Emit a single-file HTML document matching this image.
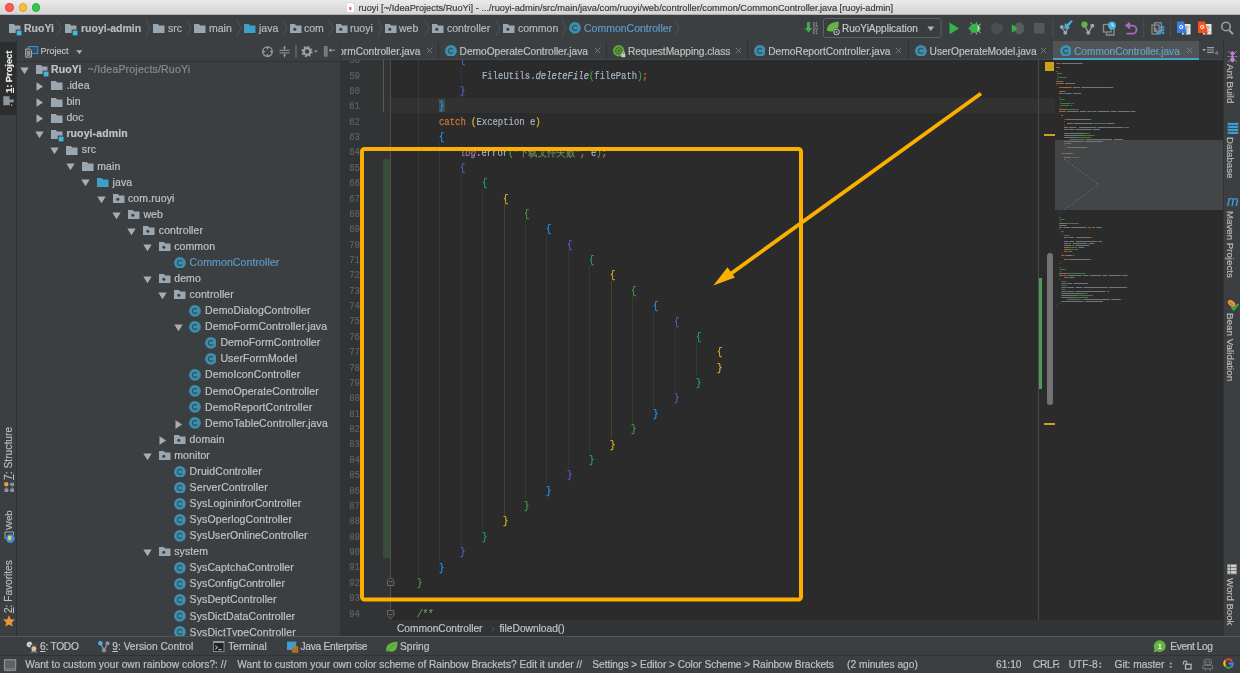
<!DOCTYPE html><html><head><meta charset="utf-8"><title>ruoyi</title><style>
*{box-sizing:border-box;margin:0;padding:0}
html,body{width:1240px;height:673px;overflow:hidden;background:#3c3f41}
body{font-family:"Liberation Sans",sans-serif;color:#c3c3c3;position:relative;font-size:10.5px;-webkit-text-stroke:.18px}
.abs{position:absolute}
.t{position:absolute;white-space:pre;line-height:16px;height:16px}
#title{left:0;top:0;width:1240px;height:15px;background:linear-gradient(#ebebeb,#d4d4d4);border-bottom:1px solid #b1b1b1}
#title .txt{position:absolute;left:358.500px;top:0.500px;line-height:15px;font-size:9.25px;color:#3a3a3a;white-space:pre}
.dot{position:absolute;top:3.400px;width:8.300px;height:8.300px;border-radius:50%}
#nav{left:0;top:15px;width:1240px;height:26.500px;background:#3c3f41;border-bottom:1px solid #36383a}
#lstripe{left:0;top:41px;width:17px;height:596px;background:#3c3f41;border-right:1px solid #323232}
#proj{left:17px;top:41px;width:323px;height:595px;background:#3c3f41;overflow:hidden}
#projedge{left:340px;top:41.500px;width:1px;height:594.500px;background:#333537;z-index:5}
#projhead{left:0;top:0;width:323px;height:21px;border-bottom:1px solid #323232}
#editor{left:340px;top:60px;width:698px;height:560px;background:#2b2b2b;overflow:hidden}
#gutter{left:0;top:0;width:50.5px;height:560px;background:#313335;border-right:1px solid #4e4e4e}
#tabs{left:340px;top:41px;width:883px;height:19.400px;background:#3c3f41;overflow:hidden}
#mstripe{left:1038px;top:60px;width:17px;height:560px;background:#2b2b2b;border-left:1px solid #4a4a4a}
#minimap{left:1055px;top:60px;width:168px;height:560px;background:#2b2b2b;overflow:hidden}
#rstripe{left:1223px;top:41px;width:17px;height:596px;background:#3c3f41;border-left:1px solid #323232}
#crumbs{left:340px;top:620px;width:883px;height:16px;background:#313335}
#bbar{left:0;top:636px;width:1240px;height:20px;background:#3c3f41;border-top:1px solid #555555}
#status{left:0;top:655px;width:1240px;height:18px;background:#3c3f41;border-top:1px solid #323232}
.ln{position:absolute;right:0;width:20px;text-align:right;font-family:"Liberation Mono",monospace;font-size:10.5px;color:#606366;white-space:pre;transform-origin:100% 50%;transform:scaleX(.86)}
.code{position:absolute;font-family:"Liberation Mono",monospace;font-size:10.5px;white-space:pre;transform-origin:0 50%;transform:scaleX(.849);color:#a9b7c6;line-height:15.37px;height:15.37px}
.vt{position:absolute;white-space:pre;font-size:10.5px;line-height:14px;height:14px;transform-origin:0 0}
#wrap{position:absolute;left:0;top:0;width:1240px;height:673px;will-change:transform;filter:grayscale(0)}</style></head><body><div id="wrap">
<div id="title" class="abs">
<div class="dot" style="left:5.3px;background:#fc5b57;border:0.5px solid #e0443e"></div>
<div class="dot" style="left:18.5px;background:#fdbc40;border:0.5px solid #dfa023"></div>
<div class="dot" style="left:31.8px;background:#34c84a;border:0.5px solid #27aa35"></div>
<svg class="abs" style="left:346px;top:2px" width="9" height="11" viewBox="0 0 9 11"><path d="M0.5 0.5h5.5l2.5 2.5v7.5h-8z" fill="#fff" stroke="#c9c9c9" stroke-width=".6"/><rect x="3.2" y="5" width="2.2" height="3" fill="#e66" /></svg>
<div class="txt">ruoyi [~/IdeaProjects/RuoYi] - .../ruoyi-admin/src/main/java/com/ruoyi/web/controller/common/CommonController.java [ruoyi-admin]</div>
</div>
<div id="nav" class="abs">
<svg class="abs" style="left:8.7px;top:8.5px" width="14.5" height="14" viewBox="0 0 14.5 14"><path d="M0 0h4.83l1.3 1.6h5.37v7.40h-11.5z" fill="#9aa7b0"/><rect x="6.70" y="5.60" width="5.8" height="5.8" fill="#3c3f41"/><rect x="7.70" y="6.60" width="4.8" height="4.8" fill="#40b6e0"/></svg>
<div class="t" style="left:24px;top:5px;color:#bbbbbb;font-weight:bold;">RuoYi</div>
<svg class="abs" style="left:65px;top:8.5px" width="14.5" height="14" viewBox="0 0 14.5 14"><path d="M0 0h4.83l1.3 1.6h5.37v7.40h-11.5z" fill="#9aa7b0"/><rect x="6.70" y="5.60" width="5.8" height="5.8" fill="#3c3f41"/><rect x="7.70" y="6.60" width="4.8" height="4.8" fill="#40b6e0"/></svg>
<div class="t" style="left:81px;top:5px;color:#bbbbbb;font-weight:bold;">ruoyi-admin</div>
<svg class="abs" style="left:153px;top:8.5px" width="14.5" height="14" viewBox="0 0 14.5 14"><path d="M0 0h4.83l1.3 1.6h5.37v7.40h-11.5z" fill="#9aa7b0"/></svg>
<div class="t" style="left:168px;top:5px;color:#bbbbbb;">src</div>
<svg class="abs" style="left:194px;top:8.5px" width="14.5" height="14" viewBox="0 0 14.5 14"><path d="M0 0h4.83l1.3 1.6h5.37v7.40h-11.5z" fill="#9aa7b0"/></svg>
<div class="t" style="left:209px;top:5px;color:#bbbbbb;">main</div>
<svg class="abs" style="left:244px;top:8.5px" width="14.5" height="14" viewBox="0 0 14.5 14"><path d="M0 0h4.83l1.3 1.6h5.37v7.40h-11.5z" fill="#3f9fc4"/></svg>
<div class="t" style="left:259px;top:5px;color:#bbbbbb;">java</div>
<svg class="abs" style="left:290px;top:8.5px" width="14.5" height="14" viewBox="0 0 14.5 14"><path d="M0 0h4.83l1.3 1.6h5.37v7.40h-11.5z" fill="#9aa7b0"/><circle cx="4.83" cy="5.22" r="1.55" fill="#3c3f41"/></svg>
<div class="t" style="left:304px;top:5px;color:#bbbbbb;">com</div>
<svg class="abs" style="left:336px;top:8.5px" width="14.5" height="14" viewBox="0 0 14.5 14"><path d="M0 0h4.83l1.3 1.6h5.37v7.40h-11.5z" fill="#9aa7b0"/><circle cx="4.83" cy="5.22" r="1.55" fill="#3c3f41"/></svg>
<div class="t" style="left:350px;top:5px;color:#bbbbbb;">ruoyi</div>
<svg class="abs" style="left:385px;top:8.5px" width="14.5" height="14" viewBox="0 0 14.5 14"><path d="M0 0h4.83l1.3 1.6h5.37v7.40h-11.5z" fill="#9aa7b0"/><circle cx="4.83" cy="5.22" r="1.55" fill="#3c3f41"/></svg>
<div class="t" style="left:399px;top:5px;color:#bbbbbb;">web</div>
<svg class="abs" style="left:432px;top:8.5px" width="14.5" height="14" viewBox="0 0 14.5 14"><path d="M0 0h4.83l1.3 1.6h5.37v7.40h-11.5z" fill="#9aa7b0"/><circle cx="4.83" cy="5.22" r="1.55" fill="#3c3f41"/></svg>
<div class="t" style="left:447px;top:5px;color:#bbbbbb;">controller</div>
<svg class="abs" style="left:503px;top:8.5px" width="14.5" height="14" viewBox="0 0 14.5 14"><path d="M0 0h4.83l1.3 1.6h5.37v7.40h-11.5z" fill="#9aa7b0"/><circle cx="4.83" cy="5.22" r="1.55" fill="#3c3f41"/></svg>
<div class="t" style="left:518px;top:5px;color:#bbbbbb;">common</div>
<svg class="abs" style="left:569px;top:7px" width="11.8" height="11.8" viewBox="0 0 12 12"><circle cx="6" cy="6" r="6" fill="#3e8fad"/><path d="M8.1 4.6A2.5 2.5 0 1 0 8.1 7.4" fill="none" stroke="#2a5468" stroke-width="1.35"/></svg>
<div class="t" style="left:584px;top:5px;color:#6199c6;">CommonController</div>
<svg class="abs" style="left:56px;top:4px" width="6" height="18" viewBox="0 0 6 18"><path d="M0.5 0.5L5 9L0.5 17.5" fill="none" stroke="#505355" stroke-width="1"/></svg>
<svg class="abs" style="left:145px;top:4px" width="6" height="18" viewBox="0 0 6 18"><path d="M0.5 0.5L5 9L0.5 17.5" fill="none" stroke="#505355" stroke-width="1"/></svg>
<svg class="abs" style="left:186px;top:4px" width="6" height="18" viewBox="0 0 6 18"><path d="M0.5 0.5L5 9L0.5 17.5" fill="none" stroke="#505355" stroke-width="1"/></svg>
<svg class="abs" style="left:236px;top:4px" width="6" height="18" viewBox="0 0 6 18"><path d="M0.5 0.5L5 9L0.5 17.5" fill="none" stroke="#505355" stroke-width="1"/></svg>
<svg class="abs" style="left:282px;top:4px" width="6" height="18" viewBox="0 0 6 18"><path d="M0.5 0.5L5 9L0.5 17.5" fill="none" stroke="#505355" stroke-width="1"/></svg>
<svg class="abs" style="left:328px;top:4px" width="6" height="18" viewBox="0 0 6 18"><path d="M0.5 0.5L5 9L0.5 17.5" fill="none" stroke="#505355" stroke-width="1"/></svg>
<svg class="abs" style="left:377px;top:4px" width="6" height="18" viewBox="0 0 6 18"><path d="M0.5 0.5L5 9L0.5 17.5" fill="none" stroke="#505355" stroke-width="1"/></svg>
<svg class="abs" style="left:424px;top:4px" width="6" height="18" viewBox="0 0 6 18"><path d="M0.5 0.5L5 9L0.5 17.5" fill="none" stroke="#505355" stroke-width="1"/></svg>
<svg class="abs" style="left:495px;top:4px" width="6" height="18" viewBox="0 0 6 18"><path d="M0.5 0.5L5 9L0.5 17.5" fill="none" stroke="#505355" stroke-width="1"/></svg>
<svg class="abs" style="left:561px;top:4px" width="6" height="18" viewBox="0 0 6 18"><path d="M0.5 0.5L5 9L0.5 17.5" fill="none" stroke="#505355" stroke-width="1"/></svg>
<svg class="abs" style="left:674px;top:4px" width="6" height="18" viewBox="0 0 6 18"><path d="M0.5 0.5L5 9L0.5 17.5" fill="none" stroke="#505355" stroke-width="1"/></svg>
<svg class="abs" style="left:800px;top:0" width="440" height="26" viewBox="800 15 440 26">
<path d="M807 22h3v6h2.4l-3.9 4.6-3.9-4.6h2.4z" fill="#3fae49"/>
<g fill="#9da0a2" font-family="Liberation Mono" font-size="4.6"><text x="812.6" y="25.6">01</text><text x="812.6" y="29.6">10</text><text x="812.6" y="33.6">01</text></g>
<rect x="823.5" y="18.5" width="117.5" height="19" rx="2" fill="#3a3d3f" stroke="#5e6163" stroke-width="1"/>
<path d="M827 31c-.5-6 4-8.5 11.500-9.500c.8 5-1 10-6 10c-2 0-3.500-.5-5.500-.5z" fill="#62b543"/>
<circle cx="836.500" cy="32" r="3.400" fill="#3a3d3f"/><circle cx="836.500" cy="32" r="2.700" fill="none" stroke="#a7adb2" stroke-width="1.100"/><circle cx="836.500" cy="32" r=".9" fill="#a7adb2"/>
<path d="M927.400 26.600h6.800l-3.400 4.300z" fill="#b4b4b4"/>
<path d="M949.500 22.500v11.800l9.400-5.900z" fill="#35b346"/>
<g stroke="#b9bcbd" stroke-width=".9" fill="none"><path d="M970.500 22.500l2 2M970 28.300h-1.500M970.500 34.300l2-2M977 22.300l-1.500 2.500M977 34.500l-1.500-2.500M979 25l1.800-1M979 31.600l1.800 1"/></g>
<ellipse cx="975" cy="28.300" rx="5.600" ry="4.600" fill="#35b346"/><path d="M977.600 24.700a4.500 4.500 0 0 1 0 7.200z" fill="#d4d6d7"/>
<path d="M991 29c0-4 3-6.500 5-6.500c1.500 0 1.500 1.200 3 1.200c2.500 0 4 2 4 4.500c0 3.500-3 6-6.500 6c-3 0-5.500-2-5.500-5.200z" fill="#4b4d4e"/>
<path d="M1017.500 22.500l3.200 0l3.200 3v5.700l-3.200 3h-3.200l-3-3v-5.700z" fill="#5a5c5d"/>
<path d="M1011.800 24.300v8.400l5.800-4.200z" fill="#35b346"/>
<rect x="1034" y="23" width="10.500" height="10.500" fill="#555758"/>
<path d="M1053 20v18" stroke="#5a5d5f" stroke-width="1" stroke-dasharray="1 1"/>
<path d="M1143.7 20v18" stroke="#5a5d5f" stroke-width="1" stroke-dasharray="1 1"/>
<path d="M1170.5 20v18" stroke="#5a5d5f" stroke-width="1" stroke-dasharray="1 1"/>
<g stroke="#9aa7b0" stroke-width="1.200" fill="none"><path d="M1062 27.500l3.200 5M1068 28l-2.300 4.500"/></g><circle cx="1061.800" cy="27" r="1.900" fill="#9aa7b0"/><circle cx="1065.300" cy="32.800" r="1.900" fill="#9aa7b0"/>
<path d="M1072.800 21l-4.300 5.600l1.800 1.300l-6 1.200l.6-6l1.700 1.500l4.600-4.300z" fill="#40b6e0"/>
<g stroke="#9aa7b0" stroke-width="1.300" fill="none"><path d="M1084.500 25l3.700 7.300M1092.300 26l-3.700 6.500"/></g><circle cx="1084.500" cy="24.600" r="3.100" fill="#62b543"/><circle cx="1092.300" cy="25.800" r="2" fill="#9aa7b0"/><circle cx="1088.300" cy="32.800" r="2" fill="#9aa7b0"/>
<g fill="none" stroke="#8c8f91" stroke-width="1.300"><rect x="1103.500" y="24.500" width="7.500" height="7.500"/><path d="M1106.500 32.500v2.500h7.500v-7.500h-2.500"/></g><circle cx="1112" cy="25.500" r="3.900" fill="#40b6e0"/><path d="M1112 23.200v2.500h2.200" stroke="#eaf6fb" stroke-width=".9" fill="none"/>
<path d="M1126.500 33.700h6a4 4 0 0 0 0-8h-4.500" fill="none" stroke="#a86ac4" stroke-width="1.800"/><path d="M1130 21.800v7.600l-5.300-3.800z" fill="#a86ac4"/>
<g fill="none" stroke="#8c8f91" stroke-width="1.200"><rect x="1154.500" y="22.800" width="7" height="8.500"/><rect x="1152" y="25" width="7" height="9"/></g><rect x="1155" y="28" width="1.600" height="3.500" fill="#8c8f91"/>
<rect x="1156.3" y="32.0" width="2.200" height="2.200" fill="#3d9fd0"/>
<rect x="1159.2" y="26.2" width="2.200" height="2.200" fill="#3d9fd0"/>
<rect x="1159.2" y="29.1" width="2.200" height="2.200" fill="#3d9fd0"/>
<rect x="1159.2" y="32.0" width="2.200" height="2.200" fill="#3d9fd0"/>
<rect x="1162.1" y="26.2" width="2.200" height="2.200" fill="#3d9fd0"/>
<rect x="1162.1" y="29.1" width="2.200" height="2.200" fill="#3d9fd0"/>
<rect x="1162.1" y="32.0" width="2.200" height="2.200" fill="#3d9fd0"/>
<rect x="1182" y="24" width="8.500" height="10.500" fill="#e9e9e4"/><path d="M1184 27h5M1186.5 26v1.200M1184.6 32l3.500-4.500M1185 28.500l3.800 3.500" stroke="#8d8d88" stroke-width=".7" fill="none"/>
<path d="M1177 21.500h7l2.800 11.500h-9.800z" fill="#3c7be0"/><path d="M1183.3 33l3.500 0l-2 2.200z" fill="#2a56b0"/>
<circle cx="1181.2" cy="27" r="1.700" fill="none" stroke="#fff" stroke-width=".9"/><path d="M1181.2 27h1.900" stroke="#fff" stroke-width=".8"/>
<rect x="1203" y="24" width="8.500" height="10.500" fill="#e9e9e4"/><path d="M1205 27h5M1207.5 26v1.200M1205.6 32l3.500-4.500M1206 28.500l3.800 3.500" stroke="#8d8d88" stroke-width=".7" fill="none"/>
<path d="M1198 21.500h7l2.800 11.500h-9.800z" fill="#f4511e"/><path d="M1204.3 33l3.500 0l-2 2.200z" fill="#c23c12"/>
<circle cx="1202.2" cy="27" r="1.700" fill="none" stroke="#fff" stroke-width=".9"/><path d="M1202.2 27h1.900" stroke="#fff" stroke-width=".8"/>
<circle cx="1226" cy="26.500" r="4.300" fill="none" stroke="#9a9c9e" stroke-width="1.600"/><path d="M1229 30l4 4.300" stroke="#9a9c9e" stroke-width="2"/>
</svg>
<div class="t" style="left:842px;top:5.700px;font-size:10px;color:#c8c8c8">RuoYiApplication</div>
</div>
<div id="lstripe" class="abs">
<div class="abs" style="left:0;top:0.8px;width:16px;height:73.600px;background:#2b2d2e"></div>
<div class="vt" style="left:2.400px;top:51.8px;font-size:9.3px;transform:rotate(-90deg);color:#ececec;font-weight:bold;"><u>1</u>: Project</div>
<div class="vt" style="left:2.400px;top:438.8px;font-size:10.3px;transform:rotate(-90deg);color:#bbbbbb;"><u>7</u>: Structure</div>
<div class="vt" style="left:2.400px;top:488.6px;font-size:9.6px;transform:rotate(-90deg);color:#bbbbbb;">Web</div>
<div class="vt" style="left:2.400px;top:572px;font-size:10.1px;transform:rotate(-90deg);color:#bbbbbb;"><u>2</u>: Favorites</div>
<svg class="abs" style="left:3px;top:54.500px" width="12" height="11" viewBox="0 0 12 11"><path d="M0.3 0.3h6.200v3.200h4.200v5.800h-10.400z" fill="#8a97a0"/><rect x="6.800" y="6.300" width="4.600" height="4.300" fill="#2b2d2e"/><rect x="8" y="8.600" width="1.200" height="1.200" fill="#c8c8c8"/></svg>
<svg class="abs" style="left:4px;top:441px" width="11" height="11" viewBox="0 0 11 11"><rect x="0.300" y="0.300" width="3.800" height="3.800" fill="#e8a33d"/><rect x="6.400" y="0.700" width="3.600" height="3.200" fill="#8a97a0"/><rect x="0.500" y="6.400" width="3.600" height="3.600" fill="#8a97a0"/><rect x="6.400" y="6.400" width="3.600" height="3.600" fill="#8a97a0"/><path d="M4 2.300h2.500M2.300 4v2.500M8.200 4v2.500M4 8.200h2.500" stroke="#6f7a82" stroke-width=".8"/></svg>
<svg class="abs" style="left:3.5px;top:490px" width="12" height="13" viewBox="0 0 12 13"><path d="M1 8v-7h8.500v3" fill="none" stroke="#9aa7b0" stroke-width="1"/><circle cx="6.300" cy="7.600" r="4.400" fill="#3d8fd6"/><path d="M4 5.200c1.500-.8 3-.3 3.600.8c.4 1.300-1 1.800-.6 3.200c-1.200.4-2.600-.2-3-1.500c-.3-1 .1-1.800 0-2.500z" fill="#f2c94c"/></svg>
<svg class="abs" style="left:3px;top:574.200px" width="12" height="12" viewBox="0 0 12 12"><path d="M6 0.300l1.750 3.900l4.100.4l-3.100 2.800l.9 4.200l-3.650-2.200l-3.650 2.200l.9-4.200l-3.100-2.800l4.100-.4z" fill="#e8963a"/></svg>
</div>
<div id="proj" class="abs"><div id="projhead" class="abs">
<svg class="abs" style="left:8px;top:4.600px" width="14" height="12" viewBox="0 0 14 12"><rect x="3.300" y="0.600" width="9.500" height="7" fill="#2e5068" stroke="#3d9fd0" stroke-width=".9"/><path d="M0.600 3h4.300l1.600 1.600v6.600h-5.900z" fill="#55585a" stroke="#a9adb0" stroke-width=".9"/><rect x="1.900" y="5" width="3.300" height="4.800" fill="#8b8f92"/></svg>
<div class="t" style="left:23.600px;top:2.400px;font-size:9px;color:#c0c0c0">Project</div>
<svg class="abs" style="left:58.600px;top:9.400px" width="7" height="5" viewBox="0 0 7 5"><path d="M0.2 0.3h6.200L3.300 4.100z" fill="#b0b0b0"/></svg>
<svg class="abs" style="left:243px;top:3px" width="80" height="16" viewBox="260 44 80 16">
<circle cx="267.500" cy="51.600" r="4.700" fill="none" stroke="#9a9da0" stroke-width="1.300"/><path d="M267.500 46.500v2.800M267.500 54v2.800M262.400 51.600h2.800M269.900 51.600h2.800" stroke="#9a9da0" stroke-width="1.400"/>
<path d="M279.500 50.300h10M279.500 52.900h10" stroke="#9a9da0" stroke-width="1"/><path d="M284.500 46v3.500M284.500 57.200v-3.500" stroke="#9a9da0" stroke-width="1"/><path d="M282.800 47.600l1.700 1.900l1.700-1.900zM282.800 55.600l1.700-1.900l1.700 1.900z" fill="#9a9da0"/>
<path d="M296 45v12.500" stroke="#6a6d6f" stroke-width="1.300"/>
<circle cx="307" cy="51.500" r="3.300" fill="none" stroke="#a0a3a5" stroke-width="2.200"/><circle cx="307" cy="51.500" r="4.900" fill="none" stroke="#a0a3a5" stroke-width="1.500" stroke-dasharray="1.930 1.920"/>
<path d="M314 50.400h3.700l-1.850 2.300z" fill="#9a9da0"/>
<rect x="324.300" y="46.700" width="2.800" height="9.400" fill="#6d7072" stroke="#9a9da0" stroke-width=".7"/><path d="M329 50.200h6" stroke="#9a9da0" stroke-width="1"/><path d="M328.600 50.200l2.600-2v4z" fill="#9a9da0"/>
</svg>
</div>
<svg class="abs" style="left:2.5px;top:25.960000000000004px" width="9" height="8" viewBox="0 0 9 8"><path d="M0.3 0.5h8.4L4.5 7.2z" fill="#adadad"/></svg>
<svg class="abs" style="left:18.5px;top:24.360000000000007px" width="14.5" height="14" viewBox="0 0 14.5 14"><path d="M0 0h4.83l1.3 1.6h5.37v7.40h-11.5z" fill="#9aa7b0"/><rect x="6.70" y="5.60" width="5.8" height="5.8" fill="#3c3f41"/><rect x="7.70" y="6.60" width="4.8" height="4.8" fill="#40b6e0"/></svg>
<div class="t" style="left:34.0px;top:20.12px;letter-spacing:.11px;font-weight:bold;">RuoYi<span style="font-weight:normal;color:#8a8d8f;letter-spacing:.2px">  ~/IdeaProjects/RuoYi</span></div>
<svg class="abs" style="left:18.900000000000006px;top:41.030000000000015px" width="8" height="9" viewBox="0 0 8 9"><path d="M0.5 0.3v8.4L7.2 4.5z" fill="#adadad"/></svg>
<svg class="abs" style="left:33.900000000000006px;top:40.430000000000014px" width="14.5" height="14" viewBox="0 0 14.5 14"><path d="M0 0h4.83l1.3 1.6h5.37v7.40h-11.5z" fill="#9aa7b0"/></svg>
<div class="t" style="left:49.4px;top:36.19px;letter-spacing:.11px;">.idea</div>
<svg class="abs" style="left:18.900000000000006px;top:57.10000000000001px" width="8" height="9" viewBox="0 0 8 9"><path d="M0.5 0.3v8.4L7.2 4.5z" fill="#adadad"/></svg>
<svg class="abs" style="left:33.900000000000006px;top:56.50000000000001px" width="14.5" height="14" viewBox="0 0 14.5 14"><path d="M0 0h4.83l1.3 1.6h5.37v7.40h-11.5z" fill="#9aa7b0"/></svg>
<div class="t" style="left:49.4px;top:52.26px;letter-spacing:.11px;">bin</div>
<svg class="abs" style="left:18.900000000000006px;top:73.17px" width="8" height="9" viewBox="0 0 8 9"><path d="M0.5 0.3v8.4L7.2 4.5z" fill="#adadad"/></svg>
<svg class="abs" style="left:33.900000000000006px;top:72.57px" width="14.5" height="14" viewBox="0 0 14.5 14"><path d="M0 0h4.83l1.3 1.6h5.37v7.40h-11.5z" fill="#9aa7b0"/></svg>
<div class="t" style="left:49.4px;top:68.33px;letter-spacing:.11px;">doc</div>
<svg class="abs" style="left:17.900000000000006px;top:90.24000000000002px" width="9" height="8" viewBox="0 0 9 8"><path d="M0.3 0.5h8.4L4.5 7.2z" fill="#adadad"/></svg>
<svg class="abs" style="left:33.900000000000006px;top:88.64000000000001px" width="14.5" height="14" viewBox="0 0 14.5 14"><path d="M0 0h4.83l1.3 1.6h5.37v7.40h-11.5z" fill="#9aa7b0"/><rect x="6.70" y="5.60" width="5.8" height="5.8" fill="#3c3f41"/><rect x="7.70" y="6.60" width="4.8" height="4.8" fill="#40b6e0"/></svg>
<div class="t" style="left:49.4px;top:84.40px;letter-spacing:.11px;font-weight:bold;">ruoyi-admin</div>
<svg class="abs" style="left:33.3px;top:106.31000000000002px" width="9" height="8" viewBox="0 0 9 8"><path d="M0.3 0.5h8.4L4.5 7.2z" fill="#adadad"/></svg>
<svg class="abs" style="left:49.3px;top:104.71000000000001px" width="14.5" height="14" viewBox="0 0 14.5 14"><path d="M0 0h4.83l1.3 1.6h5.37v7.40h-11.5z" fill="#9aa7b0"/></svg>
<div class="t" style="left:64.8px;top:100.47px;letter-spacing:.11px;">src</div>
<svg class="abs" style="left:48.7px;top:122.38000000000001px" width="9" height="8" viewBox="0 0 9 8"><path d="M0.3 0.5h8.4L4.5 7.2z" fill="#adadad"/></svg>
<svg class="abs" style="left:64.7px;top:120.78px" width="14.5" height="14" viewBox="0 0 14.5 14"><path d="M0 0h4.83l1.3 1.6h5.37v7.40h-11.5z" fill="#9aa7b0"/></svg>
<div class="t" style="left:80.2px;top:116.54px;letter-spacing:.11px;">main</div>
<svg class="abs" style="left:64.1px;top:138.45px" width="9" height="8" viewBox="0 0 9 8"><path d="M0.3 0.5h8.4L4.5 7.2z" fill="#adadad"/></svg>
<svg class="abs" style="left:80.1px;top:136.85px" width="14.5" height="14" viewBox="0 0 14.5 14"><path d="M0 0h4.83l1.3 1.6h5.37v7.40h-11.5z" fill="#3f9fc4"/></svg>
<div class="t" style="left:95.6px;top:132.61px;letter-spacing:.11px;">java</div>
<svg class="abs" style="left:79.5px;top:154.51999999999998px" width="9" height="8" viewBox="0 0 9 8"><path d="M0.3 0.5h8.4L4.5 7.2z" fill="#adadad"/></svg>
<svg class="abs" style="left:95.5px;top:152.92px" width="14.5" height="14" viewBox="0 0 14.5 14"><path d="M0 0h4.83l1.3 1.6h5.37v7.40h-11.5z" fill="#9aa7b0"/><circle cx="4.83" cy="5.22" r="1.55" fill="#3c3f41"/></svg>
<div class="t" style="left:111.0px;top:148.68px;letter-spacing:.11px;">com.ruoyi</div>
<svg class="abs" style="left:94.9px;top:170.58999999999997px" width="9" height="8" viewBox="0 0 9 8"><path d="M0.3 0.5h8.4L4.5 7.2z" fill="#adadad"/></svg>
<svg class="abs" style="left:110.9px;top:168.98999999999998px" width="14.5" height="14" viewBox="0 0 14.5 14"><path d="M0 0h4.83l1.3 1.6h5.37v7.40h-11.5z" fill="#9aa7b0"/><circle cx="4.83" cy="5.22" r="1.55" fill="#3c3f41"/></svg>
<div class="t" style="left:126.4px;top:164.75px;letter-spacing:.11px;">web</div>
<svg class="abs" style="left:110.30000000000001px;top:186.65999999999997px" width="9" height="8" viewBox="0 0 9 8"><path d="M0.3 0.5h8.4L4.5 7.2z" fill="#adadad"/></svg>
<svg class="abs" style="left:126.30000000000001px;top:185.05999999999997px" width="14.5" height="14" viewBox="0 0 14.5 14"><path d="M0 0h4.83l1.3 1.6h5.37v7.40h-11.5z" fill="#9aa7b0"/><circle cx="4.83" cy="5.22" r="1.55" fill="#3c3f41"/></svg>
<div class="t" style="left:141.8px;top:180.82px;letter-spacing:.11px;">controller</div>
<svg class="abs" style="left:125.69999999999999px;top:202.73000000000002px" width="9" height="8" viewBox="0 0 9 8"><path d="M0.3 0.5h8.4L4.5 7.2z" fill="#adadad"/></svg>
<svg class="abs" style="left:141.7px;top:201.13000000000002px" width="14.5" height="14" viewBox="0 0 14.5 14"><path d="M0 0h4.83l1.3 1.6h5.37v7.40h-11.5z" fill="#9aa7b0"/><circle cx="4.83" cy="5.22" r="1.55" fill="#3c3f41"/></svg>
<div class="t" style="left:157.2px;top:196.89px;letter-spacing:.11px;">common</div>
<svg class="abs" style="left:156.9px;top:215.70000000000002px" width="11.8" height="11.8" viewBox="0 0 12 12"><circle cx="6" cy="6" r="6" fill="#3e8fad"/><path d="M8.1 4.6A2.5 2.5 0 1 0 8.1 7.4" fill="none" stroke="#2a5468" stroke-width="1.35"/></svg>
<div class="t" style="left:172.6px;top:212.96px;letter-spacing:.11px;color:#6199c6;">CommonController</div>
<svg class="abs" style="left:125.69999999999999px;top:234.87px" width="9" height="8" viewBox="0 0 9 8"><path d="M0.3 0.5h8.4L4.5 7.2z" fill="#adadad"/></svg>
<svg class="abs" style="left:141.7px;top:233.27px" width="14.5" height="14" viewBox="0 0 14.5 14"><path d="M0 0h4.83l1.3 1.6h5.37v7.40h-11.5z" fill="#9aa7b0"/><circle cx="4.83" cy="5.22" r="1.55" fill="#3c3f41"/></svg>
<div class="t" style="left:157.2px;top:229.03px;letter-spacing:.11px;">demo</div>
<svg class="abs" style="left:141.1px;top:250.94px" width="9" height="8" viewBox="0 0 9 8"><path d="M0.3 0.5h8.4L4.5 7.2z" fill="#adadad"/></svg>
<svg class="abs" style="left:157.1px;top:249.34px" width="14.5" height="14" viewBox="0 0 14.5 14"><path d="M0 0h4.83l1.3 1.6h5.37v7.40h-11.5z" fill="#9aa7b0"/><circle cx="4.83" cy="5.22" r="1.55" fill="#3c3f41"/></svg>
<div class="t" style="left:172.6px;top:245.10px;letter-spacing:.11px;">controller</div>
<svg class="abs" style="left:172.3px;top:263.91px" width="11.8" height="11.8" viewBox="0 0 12 12"><circle cx="6" cy="6" r="6" fill="#3e8fad"/><path d="M8.1 4.6A2.5 2.5 0 1 0 8.1 7.4" fill="none" stroke="#2a5468" stroke-width="1.35"/></svg>
<div class="t" style="left:188.0px;top:261.17px;letter-spacing:.11px;">DemoDialogController</div>
<svg class="abs" style="left:156.5px;top:283.08px" width="9" height="8" viewBox="0 0 9 8"><path d="M0.3 0.5h8.4L4.5 7.2z" fill="#adadad"/></svg>
<svg class="abs" style="left:172.3px;top:279.98px" width="11.8" height="11.8" viewBox="0 0 12 12"><circle cx="6" cy="6" r="6" fill="#3e8fad"/><path d="M8.1 4.6A2.5 2.5 0 1 0 8.1 7.4" fill="none" stroke="#2a5468" stroke-width="1.35"/></svg>
<div class="t" style="left:188.0px;top:277.24px;letter-spacing:.11px;">DemoFormController.java</div>
<svg class="abs" style="left:187.70000000000002px;top:296.05px" width="11.8" height="11.8" viewBox="0 0 12 12"><circle cx="6" cy="6" r="6" fill="#3e8fad"/><path d="M8.1 4.6A2.5 2.5 0 1 0 8.1 7.4" fill="none" stroke="#2a5468" stroke-width="1.35"/></svg>
<div class="t" style="left:203.4px;top:293.31px;letter-spacing:.11px;">DemoFormController</div>
<svg class="abs" style="left:187.70000000000002px;top:312.12px" width="11.8" height="11.8" viewBox="0 0 12 12"><circle cx="6" cy="6" r="6" fill="#3e8fad"/><path d="M8.1 4.6A2.5 2.5 0 1 0 8.1 7.4" fill="none" stroke="#2a5468" stroke-width="1.35"/></svg>
<div class="t" style="left:203.4px;top:309.38px;letter-spacing:.11px;">UserFormModel</div>
<svg class="abs" style="left:172.3px;top:328.19px" width="11.8" height="11.8" viewBox="0 0 12 12"><circle cx="6" cy="6" r="6" fill="#3e8fad"/><path d="M8.1 4.6A2.5 2.5 0 1 0 8.1 7.4" fill="none" stroke="#2a5468" stroke-width="1.35"/></svg>
<div class="t" style="left:188.0px;top:325.45px;letter-spacing:.11px;">DemoIconController</div>
<svg class="abs" style="left:172.3px;top:344.26px" width="11.8" height="11.8" viewBox="0 0 12 12"><circle cx="6" cy="6" r="6" fill="#3e8fad"/><path d="M8.1 4.6A2.5 2.5 0 1 0 8.1 7.4" fill="none" stroke="#2a5468" stroke-width="1.35"/></svg>
<div class="t" style="left:188.0px;top:341.52px;letter-spacing:.11px;">DemoOperateController</div>
<svg class="abs" style="left:172.3px;top:360.33000000000004px" width="11.8" height="11.8" viewBox="0 0 12 12"><circle cx="6" cy="6" r="6" fill="#3e8fad"/><path d="M8.1 4.6A2.5 2.5 0 1 0 8.1 7.4" fill="none" stroke="#2a5468" stroke-width="1.35"/></svg>
<div class="t" style="left:188.0px;top:357.59px;letter-spacing:.11px;">DemoReportController</div>
<svg class="abs" style="left:157.5px;top:378.5px" width="8" height="9" viewBox="0 0 8 9"><path d="M0.5 0.3v8.4L7.2 4.5z" fill="#adadad"/></svg>
<svg class="abs" style="left:172.3px;top:376.40000000000003px" width="11.8" height="11.8" viewBox="0 0 12 12"><circle cx="6" cy="6" r="6" fill="#3e8fad"/><path d="M8.1 4.6A2.5 2.5 0 1 0 8.1 7.4" fill="none" stroke="#2a5468" stroke-width="1.35"/></svg>
<div class="t" style="left:188.0px;top:373.66px;letter-spacing:.11px;">DemoTableController.java</div>
<svg class="abs" style="left:142.1px;top:394.57px" width="8" height="9" viewBox="0 0 8 9"><path d="M0.5 0.3v8.4L7.2 4.5z" fill="#adadad"/></svg>
<svg class="abs" style="left:157.1px;top:393.97px" width="14.5" height="14" viewBox="0 0 14.5 14"><path d="M0 0h4.83l1.3 1.6h5.37v7.40h-11.5z" fill="#9aa7b0"/><circle cx="4.83" cy="5.22" r="1.55" fill="#3c3f41"/></svg>
<div class="t" style="left:172.6px;top:389.73px;letter-spacing:.11px;">domain</div>
<svg class="abs" style="left:125.69999999999999px;top:411.64px" width="9" height="8" viewBox="0 0 9 8"><path d="M0.3 0.5h8.4L4.5 7.2z" fill="#adadad"/></svg>
<svg class="abs" style="left:141.7px;top:410.04px" width="14.5" height="14" viewBox="0 0 14.5 14"><path d="M0 0h4.83l1.3 1.6h5.37v7.40h-11.5z" fill="#9aa7b0"/><circle cx="4.83" cy="5.22" r="1.55" fill="#3c3f41"/></svg>
<div class="t" style="left:157.2px;top:405.80px;letter-spacing:.11px;">monitor</div>
<svg class="abs" style="left:156.9px;top:424.61px" width="11.8" height="11.8" viewBox="0 0 12 12"><circle cx="6" cy="6" r="6" fill="#3e8fad"/><path d="M8.1 4.6A2.5 2.5 0 1 0 8.1 7.4" fill="none" stroke="#2a5468" stroke-width="1.35"/></svg>
<div class="t" style="left:172.6px;top:421.87px;letter-spacing:.11px;">DruidController</div>
<svg class="abs" style="left:156.9px;top:440.68px" width="11.8" height="11.8" viewBox="0 0 12 12"><circle cx="6" cy="6" r="6" fill="#3e8fad"/><path d="M8.1 4.6A2.5 2.5 0 1 0 8.1 7.4" fill="none" stroke="#2a5468" stroke-width="1.35"/></svg>
<div class="t" style="left:172.6px;top:437.94px;letter-spacing:.11px;">ServerController</div>
<svg class="abs" style="left:156.9px;top:456.75px" width="11.8" height="11.8" viewBox="0 0 12 12"><circle cx="6" cy="6" r="6" fill="#3e8fad"/><path d="M8.1 4.6A2.5 2.5 0 1 0 8.1 7.4" fill="none" stroke="#2a5468" stroke-width="1.35"/></svg>
<div class="t" style="left:172.6px;top:454.01px;letter-spacing:.11px;">SysLogininforController</div>
<svg class="abs" style="left:156.9px;top:472.82000000000005px" width="11.8" height="11.8" viewBox="0 0 12 12"><circle cx="6" cy="6" r="6" fill="#3e8fad"/><path d="M8.1 4.6A2.5 2.5 0 1 0 8.1 7.4" fill="none" stroke="#2a5468" stroke-width="1.35"/></svg>
<div class="t" style="left:172.6px;top:470.08px;letter-spacing:.11px;">SysOperlogController</div>
<svg class="abs" style="left:156.9px;top:488.8900000000001px" width="11.8" height="11.8" viewBox="0 0 12 12"><circle cx="6" cy="6" r="6" fill="#3e8fad"/><path d="M8.1 4.6A2.5 2.5 0 1 0 8.1 7.4" fill="none" stroke="#2a5468" stroke-width="1.35"/></svg>
<div class="t" style="left:172.6px;top:486.15px;letter-spacing:.11px;">SysUserOnlineController</div>
<svg class="abs" style="left:125.69999999999999px;top:508.06px" width="9" height="8" viewBox="0 0 9 8"><path d="M0.3 0.5h8.4L4.5 7.2z" fill="#adadad"/></svg>
<svg class="abs" style="left:141.7px;top:506.46000000000004px" width="14.5" height="14" viewBox="0 0 14.5 14"><path d="M0 0h4.83l1.3 1.6h5.37v7.40h-11.5z" fill="#9aa7b0"/><circle cx="4.83" cy="5.22" r="1.55" fill="#3c3f41"/></svg>
<div class="t" style="left:157.2px;top:502.22px;letter-spacing:.11px;">system</div>
<svg class="abs" style="left:156.9px;top:521.0300000000001px" width="11.8" height="11.8" viewBox="0 0 12 12"><circle cx="6" cy="6" r="6" fill="#3e8fad"/><path d="M8.1 4.6A2.5 2.5 0 1 0 8.1 7.4" fill="none" stroke="#2a5468" stroke-width="1.35"/></svg>
<div class="t" style="left:172.6px;top:518.29px;letter-spacing:.11px;">SysCaptchaController</div>
<svg class="abs" style="left:156.9px;top:537.1px" width="11.8" height="11.8" viewBox="0 0 12 12"><circle cx="6" cy="6" r="6" fill="#3e8fad"/><path d="M8.1 4.6A2.5 2.5 0 1 0 8.1 7.4" fill="none" stroke="#2a5468" stroke-width="1.35"/></svg>
<div class="t" style="left:172.6px;top:534.36px;letter-spacing:.11px;">SysConfigController</div>
<svg class="abs" style="left:156.9px;top:553.1700000000001px" width="11.8" height="11.8" viewBox="0 0 12 12"><circle cx="6" cy="6" r="6" fill="#3e8fad"/><path d="M8.1 4.6A2.5 2.5 0 1 0 8.1 7.4" fill="none" stroke="#2a5468" stroke-width="1.35"/></svg>
<div class="t" style="left:172.6px;top:550.43px;letter-spacing:.11px;">SysDeptController</div>
<svg class="abs" style="left:156.9px;top:569.24px" width="11.8" height="11.8" viewBox="0 0 12 12"><circle cx="6" cy="6" r="6" fill="#3e8fad"/><path d="M8.1 4.6A2.5 2.5 0 1 0 8.1 7.4" fill="none" stroke="#2a5468" stroke-width="1.35"/></svg>
<div class="t" style="left:172.6px;top:566.50px;letter-spacing:.11px;">SysDictDataController</div>
<svg class="abs" style="left:156.9px;top:585.3100000000001px" width="11.8" height="11.8" viewBox="0 0 12 12"><circle cx="6" cy="6" r="6" fill="#3e8fad"/><path d="M8.1 4.6A2.5 2.5 0 1 0 8.1 7.4" fill="none" stroke="#2a5468" stroke-width="1.35"/></svg>
<div class="t" style="left:172.6px;top:582.57px;letter-spacing:.11px;">SysDictTypeController</div>
</div>
<div id="projedge" class="abs"></div>
<div id="tabs" class="abs">
<div class="abs" style="left:0;top:18px;width:883px;height:1px;background:#454749"></div>
<div class="abs" style="left:713px;top:0;width:146px;height:19.400px;background:#505456;border-bottom:2.500px solid #45a4c4"></div>
<div class="t" style="left:-8px;top:2.6px;font-size:10.2px;letter-spacing:-.03px;">FormController.java</div>
<svg class="abs" style="left:85.5px;top:6.199999999999999px" width="7" height="7" viewBox="0 0 7 7"><path d="M0.8 0.8L6.2 6.2M6.200 0.8L0.8 6.2" stroke="#7a7d7f" stroke-width="1"/></svg>
<div class="abs" style="left:98px;top:0;width:1px;height:18px;background:#323232"></div>
<div class="abs" style="left:265.70000000000005px;top:0;width:1px;height:18px;background:#323232"></div>
<div class="abs" style="left:407px;top:0;width:1px;height:18px;background:#323232"></div>
<div class="abs" style="left:568.4px;top:0;width:1px;height:18px;background:#323232"></div>
<svg class="abs" style="left:105px;top:3.6px" width="11.8" height="11.8" viewBox="0 0 12 12"><circle cx="6" cy="6" r="6" fill="#3e8fad"/><path d="M8.1 4.6A2.5 2.5 0 1 0 8.1 7.4" fill="none" stroke="#2a5468" stroke-width="1.35"/></svg>
<div class="t" style="left:119.6px;top:2.6px;font-size:10.2px;letter-spacing:-.03px;color:#c0c0c0">DemoOperateController.java</div>
<svg class="abs" style="left:254.0px;top:6.199999999999999px" width="7" height="7" viewBox="0 0 7 7"><path d="M0.8 0.8L6.2 6.2M6.200 0.8L0.8 6.2" stroke="#7a7d7f" stroke-width="1"/></svg>
<svg class="abs" style="left:273.4px;top:3.6px" width="13" height="13" viewBox="0 0 13 13"><circle cx="5.700" cy="5.700" r="5.700" fill="#62a33e"/><circle cx="5.700" cy="5.700" r="3.100" fill="none" stroke="#3c5a2c" stroke-width="1"/><circle cx="5.700" cy="5.700" r="1.200" fill="#3c5a2c"/><rect x="8.300" y="8.800" width="4" height="3.400" fill="#c9ccce"/><path d="M9.200 9v-1.200a1.100 1.100 0 0 1 2.200 0v1.200" fill="none" stroke="#c9ccce" stroke-width=".8"/></svg>
<div class="t" style="left:287.9px;top:2.6px;font-size:10.2px;letter-spacing:-.03px;color:#c0c0c0">RequestMapping.class</div>
<svg class="abs" style="left:394.5px;top:6.199999999999999px" width="7" height="7" viewBox="0 0 7 7"><path d="M0.8 0.8L6.2 6.2M6.200 0.8L0.8 6.2" stroke="#7a7d7f" stroke-width="1"/></svg>
<svg class="abs" style="left:413.5px;top:3.6px" width="11.8" height="11.8" viewBox="0 0 12 12"><circle cx="6" cy="6" r="6" fill="#3e8fad"/><path d="M8.1 4.6A2.5 2.5 0 1 0 8.1 7.4" fill="none" stroke="#2a5468" stroke-width="1.35"/></svg>
<div class="t" style="left:428.3px;top:2.6px;font-size:10.2px;letter-spacing:-.03px;color:#c0c0c0">DemoReportController.java</div>
<svg class="abs" style="left:555.3px;top:6.199999999999999px" width="7" height="7" viewBox="0 0 7 7"><path d="M0.8 0.8L6.2 6.2M6.200 0.8L0.8 6.2" stroke="#7a7d7f" stroke-width="1"/></svg>
<svg class="abs" style="left:575px;top:3.6px" width="11.8" height="11.8" viewBox="0 0 12 12"><circle cx="6" cy="6" r="6" fill="#3e8fad"/><path d="M8.1 4.6A2.5 2.5 0 1 0 8.1 7.4" fill="none" stroke="#2a5468" stroke-width="1.35"/></svg>
<div class="t" style="left:589.6px;top:2.6px;font-size:10.2px;letter-spacing:-.03px;color:#c0c0c0">UserOperateModel.java</div>
<svg class="abs" style="left:699.9000000000001px;top:6.199999999999999px" width="7" height="7" viewBox="0 0 7 7"><path d="M0.8 0.8L6.2 6.2M6.200 0.8L0.8 6.2" stroke="#7a7d7f" stroke-width="1"/></svg>
<svg class="abs" style="left:719.5999999999999px;top:3.6px" width="11.8" height="11.8" viewBox="0 0 12 12"><circle cx="6" cy="6" r="6" fill="#3e8fad"/><path d="M8.1 4.6A2.5 2.5 0 1 0 8.1 7.4" fill="none" stroke="#2a5468" stroke-width="1.35"/></svg>
<div class="t" style="left:734.0px;top:2.6px;font-size:10.2px;letter-spacing:-.03px;color:#6a9fc9">CommonController.java</div>
<svg class="abs" style="left:845.8px;top:6.199999999999999px" width="7" height="7" viewBox="0 0 7 7"><path d="M0.8 0.8L6.2 6.2M6.200 0.8L0.8 6.2" stroke="#7a7d7f" stroke-width="1"/></svg>
<svg class="abs" style="left:862px;top:5px" width="18" height="10" viewBox="0 0 18 10"><path d="M0.4 3h3.400l-1.700 2.200z" fill="#adadad"/><path d="M5 1.700h7M5 4h7M5 6.300h7" stroke="#9a9c9e" stroke-width="1.200"/><text x="13" y="8.500" font-family="Liberation Sans" font-size="5.500" fill="#adadad">4</text></svg>
</div>
<div id="editor" class="abs">
<div class="abs" style="left:51px;top:37.80px;width:700px;height:15.37px;background:#323232"></div>
<div id="gutter" class="abs">
<div class="ln" style="top:-6.81px;right:30px;line-height:15.37px">58</div>
<div class="ln" style="top:8.56px;right:30px;line-height:15.37px">59</div>
<div class="ln" style="top:23.93px;right:30px;line-height:15.37px">60</div>
<div class="ln" style="top:39.30px;right:30px;line-height:15.37px">61</div>
<div class="ln" style="top:54.67px;right:30px;line-height:15.37px">62</div>
<div class="ln" style="top:70.04px;right:30px;line-height:15.37px">63</div>
<div class="ln" style="top:85.41px;right:30px;line-height:15.37px">64</div>
<div class="ln" style="top:100.78px;right:30px;line-height:15.37px">65</div>
<div class="ln" style="top:116.15px;right:30px;line-height:15.37px">66</div>
<div class="ln" style="top:131.52px;right:30px;line-height:15.37px">67</div>
<div class="ln" style="top:146.89px;right:30px;line-height:15.37px">68</div>
<div class="ln" style="top:162.26px;right:30px;line-height:15.37px">69</div>
<div class="ln" style="top:177.63px;right:30px;line-height:15.37px">70</div>
<div class="ln" style="top:193.00px;right:30px;line-height:15.37px">71</div>
<div class="ln" style="top:208.37px;right:30px;line-height:15.37px">72</div>
<div class="ln" style="top:223.74px;right:30px;line-height:15.37px">73</div>
<div class="ln" style="top:239.11px;right:30px;line-height:15.37px">74</div>
<div class="ln" style="top:254.48px;right:30px;line-height:15.37px">75</div>
<div class="ln" style="top:269.85px;right:30px;line-height:15.37px">76</div>
<div class="ln" style="top:285.22px;right:30px;line-height:15.37px">77</div>
<div class="ln" style="top:300.59px;right:30px;line-height:15.37px">78</div>
<div class="ln" style="top:315.96px;right:30px;line-height:15.37px">79</div>
<div class="ln" style="top:331.33px;right:30px;line-height:15.37px">80</div>
<div class="ln" style="top:346.70px;right:30px;line-height:15.37px">81</div>
<div class="ln" style="top:362.07px;right:30px;line-height:15.37px">82</div>
<div class="ln" style="top:377.44px;right:30px;line-height:15.37px">83</div>
<div class="ln" style="top:392.81px;right:30px;line-height:15.37px">84</div>
<div class="ln" style="top:408.18px;right:30px;line-height:15.37px">85</div>
<div class="ln" style="top:423.55px;right:30px;line-height:15.37px">86</div>
<div class="ln" style="top:438.92px;right:30px;line-height:15.37px">87</div>
<div class="ln" style="top:454.29px;right:30px;line-height:15.37px">88</div>
<div class="ln" style="top:469.66px;right:30px;line-height:15.37px">89</div>
<div class="ln" style="top:485.03px;right:30px;line-height:15.37px">90</div>
<div class="ln" style="top:500.40px;right:30px;line-height:15.37px">91</div>
<div class="ln" style="top:515.77px;right:30px;line-height:15.37px">92</div>
<div class="ln" style="top:531.14px;right:30px;line-height:15.37px">93</div>
<div class="ln" style="top:546.51px;right:30px;line-height:15.37px">94</div>
<div class="abs" style="left:42.6px;top:0;width:1.3px;height:51.67px;background:#4a5f4e"></div>
<div class="abs" style="left:43.4px;top:99.48px;width:7.1px;height:398.62px;background:#384c38"></div>
</div>
<div class="abs" style="left:77.90px;top:0.00px;width:1px;height:516.27px;background:#43a047;opacity:.17"></div>
<div class="abs" style="left:99.30px;top:0.00px;width:1px;height:-21.68px;background:#2196f3;opacity:.17"></div>
<div class="abs" style="left:120.70px;top:5.56px;width:1px;height:18.87px;background:#5463c8;opacity:.17"></div>
<div class="abs" style="left:99.30px;top:82.41px;width:1px;height:418.49px;background:#2196f3;opacity:.17"></div>
<div class="abs" style="left:120.70px;top:113.15px;width:1px;height:372.38px;background:#5463c8;opacity:.17"></div>
<div class="abs" style="left:142.10px;top:128.52px;width:1px;height:341.64px;background:#1fa090;opacity:.17"></div>
<div class="abs" style="left:163.50px;top:143.89px;width:1px;height:310.90px;background:#e6b422;opacity:.17"></div>
<div class="abs" style="left:184.90px;top:159.26px;width:1px;height:280.16px;background:#43a047;opacity:.17"></div>
<div class="abs" style="left:206.30px;top:174.63px;width:1px;height:249.42px;background:#2196f3;opacity:.17"></div>
<div class="abs" style="left:227.70px;top:190.00px;width:1px;height:218.68px;background:#5463c8;opacity:.17"></div>
<div class="abs" style="left:249.10px;top:205.37px;width:1px;height:187.94px;background:#1fa090;opacity:.17"></div>
<div class="abs" style="left:270.50px;top:220.74px;width:1px;height:157.20px;background:#e6b422;opacity:.17"></div>
<div class="abs" style="left:291.90px;top:236.11px;width:1px;height:126.46px;background:#43a047;opacity:.17"></div>
<div class="abs" style="left:313.30px;top:251.48px;width:1px;height:95.72px;background:#2196f3;opacity:.17"></div>
<div class="abs" style="left:334.70px;top:266.85px;width:1px;height:64.98px;background:#5463c8;opacity:.17"></div>
<div class="abs" style="left:356.10px;top:282.22px;width:1px;height:34.24px;background:#1fa090;opacity:.17"></div>
<div class="code" style="left:120.20px;top:-6.71px"><span style="color:#5463c8;-webkit-text-stroke:.25px #5463c8;">{</span></div>
<div class="code" style="left:141.60px;top:8.66px">FileUtils.<span style="color:#a9b7c6;-webkit-text-stroke:.25px #a9b7c6;font-style:italic">deleteFile</span><span style="color:#43a047;-webkit-text-stroke:.25px #43a047;">(</span>filePath<span style="color:#43a047;-webkit-text-stroke:.25px #43a047;">)</span><span style="color:#cc7832;-webkit-text-stroke:.25px #cc7832;">;</span></div>
<div class="code" style="left:120.20px;top:24.03px"><span style="color:#5463c8;-webkit-text-stroke:.25px #5463c8;">}</span></div>
<div class="abs" style="left:98.50px;top:38.80px;width:6px;height:13.4px;background:#3b514d"></div>
<div class="code" style="left:98.80px;top:39.40px"><span style="color:#2196f3;-webkit-text-stroke:.25px #2196f3;">}</span></div>
<div class="code" style="left:98.80px;top:54.77px"><span style="color:#cc7832;-webkit-text-stroke:.25px #cc7832;">catch</span> <span style="color:#e6b422;-webkit-text-stroke:.25px #e6b422;">(</span>Exception e<span style="color:#e6b422;-webkit-text-stroke:.25px #e6b422;">)</span></div>
<div class="code" style="left:98.80px;top:70.14px"><span style="color:#2196f3;-webkit-text-stroke:.25px #2196f3;">{</span></div>
<div class="code" style="left:120.20px;top:85.51px"><span style="color:#9876aa;-webkit-text-stroke:.25px #9876aa;font-style:italic">log</span>.error<span style="color:#43a047;-webkit-text-stroke:.25px #43a047;">(</span><span style="color:#6a8759;-webkit-text-stroke:.25px #6a8759;">"下载文件失败"</span><span style="color:#cc7832;-webkit-text-stroke:.25px #cc7832;">, </span>e<span style="color:#43a047;-webkit-text-stroke:.25px #43a047;">)</span><span style="color:#cc7832;-webkit-text-stroke:.25px #cc7832;">;</span></div>
<div class="code" style="left:120.20px;top:100.88px"><span style="color:#5463c8;-webkit-text-stroke:.25px #5463c8;">{</span></div>
<div class="code" style="left:120.20px;top:485.13px"><span style="color:#5463c8;-webkit-text-stroke:.25px #5463c8;">}</span></div>
<div class="code" style="left:141.60px;top:116.25px"><span style="color:#1fa090;-webkit-text-stroke:.25px #1fa090;">{</span></div>
<div class="code" style="left:141.60px;top:469.76px"><span style="color:#1fa090;-webkit-text-stroke:.25px #1fa090;">}</span></div>
<div class="code" style="left:163.00px;top:131.62px"><span style="color:#e6b422;-webkit-text-stroke:.25px #e6b422;">{</span></div>
<div class="code" style="left:163.00px;top:454.39px"><span style="color:#e6b422;-webkit-text-stroke:.25px #e6b422;">}</span></div>
<div class="code" style="left:184.40px;top:146.99px"><span style="color:#43a047;-webkit-text-stroke:.25px #43a047;">{</span></div>
<div class="code" style="left:184.40px;top:439.02px"><span style="color:#43a047;-webkit-text-stroke:.25px #43a047;">}</span></div>
<div class="code" style="left:205.80px;top:162.36px"><span style="color:#2196f3;-webkit-text-stroke:.25px #2196f3;">{</span></div>
<div class="code" style="left:205.80px;top:423.65px"><span style="color:#2196f3;-webkit-text-stroke:.25px #2196f3;">}</span></div>
<div class="code" style="left:227.20px;top:177.73px"><span style="color:#5463c8;-webkit-text-stroke:.25px #5463c8;">{</span></div>
<div class="code" style="left:227.20px;top:408.28px"><span style="color:#5463c8;-webkit-text-stroke:.25px #5463c8;">}</span></div>
<div class="code" style="left:248.60px;top:193.10px"><span style="color:#1fa090;-webkit-text-stroke:.25px #1fa090;">{</span></div>
<div class="code" style="left:248.60px;top:392.91px"><span style="color:#1fa090;-webkit-text-stroke:.25px #1fa090;">}</span></div>
<div class="code" style="left:270.00px;top:208.47px"><span style="color:#e6b422;-webkit-text-stroke:.25px #e6b422;">{</span></div>
<div class="code" style="left:270.00px;top:377.54px"><span style="color:#e6b422;-webkit-text-stroke:.25px #e6b422;">}</span></div>
<div class="code" style="left:291.40px;top:223.84px"><span style="color:#43a047;-webkit-text-stroke:.25px #43a047;">{</span></div>
<div class="code" style="left:291.40px;top:362.17px"><span style="color:#43a047;-webkit-text-stroke:.25px #43a047;">}</span></div>
<div class="code" style="left:312.80px;top:239.21px"><span style="color:#2196f3;-webkit-text-stroke:.25px #2196f3;">{</span></div>
<div class="code" style="left:312.80px;top:346.80px"><span style="color:#2196f3;-webkit-text-stroke:.25px #2196f3;">}</span></div>
<div class="code" style="left:334.20px;top:254.58px"><span style="color:#5463c8;-webkit-text-stroke:.25px #5463c8;">{</span></div>
<div class="code" style="left:334.20px;top:331.43px"><span style="color:#5463c8;-webkit-text-stroke:.25px #5463c8;">}</span></div>
<div class="code" style="left:355.60px;top:269.95px"><span style="color:#1fa090;-webkit-text-stroke:.25px #1fa090;">{</span></div>
<div class="code" style="left:355.60px;top:316.06px"><span style="color:#1fa090;-webkit-text-stroke:.25px #1fa090;">}</span></div>
<div class="code" style="left:377.00px;top:285.32px"><span style="color:#e6b422;-webkit-text-stroke:.25px #e6b422;">{</span></div>
<div class="code" style="left:377.00px;top:300.69px"><span style="color:#e6b422;-webkit-text-stroke:.25px #e6b422;">}</span></div>
<div class="code" style="left:98.80px;top:500.50px"><span style="color:#2196f3;-webkit-text-stroke:.25px #2196f3;">}</span></div>
<div class="code" style="left:77.40px;top:515.87px"><span style="color:#43a047;-webkit-text-stroke:.25px #43a047;">}</span></div>
<div class="code" style="left:77.40px;top:546.61px"><span style="color:#629755;-webkit-text-stroke:.25px #629755;font-style:italic">/**</span></div>
<svg class="abs" style="left:46.9px;top:517.45px" width="8" height="9" viewBox="0 0 8 9"><path d="M0.5 8.500v-5l3.200-3l3.200 3v5z" fill="#313335" stroke="#6c6f71" stroke-width=".9"/><path d="M2.200 4.500h3" stroke="#6c6f71" stroke-width=".9"/></svg>
<svg class="abs" style="left:46.9px;top:550.19px" width="8" height="9" viewBox="0 0 8 9"><path d="M0.5 0.5v5l3.200 3l3.200-3v-5z" fill="#313335" stroke="#6c6f71" stroke-width=".9"/><path d="M2.200 4.500h3" stroke="#6c6f71" stroke-width=".9"/></svg>
</div>
<div id="mstripe" class="abs">
<div class="abs" style="left:0;top:37.80px;width:17px;height:15.37px;background:#323232"></div>
<div class="abs" style="left:6px;top:2px;width:9.3px;height:9.3px;background:#cfa01c"></div>
<div class="abs" style="left:4.5px;top:73.6px;width:12px;height:2.2px;background:#cfa01c"></div>
<div class="abs" style="left:4.5px;top:363.2px;width:12px;height:2.2px;background:#cfa01c"></div>
<div class="abs" style="left:0.2px;top:218px;width:2.4px;height:111px;background:#4c9a5c"></div>
<div class="abs" style="left:7.7px;top:192.8px;width:6.2px;height:152px;background:#737373;border-radius:3.1px"></div>
</div>
<div id="minimap" class="abs">
<div class="abs" style="left:0;top:80.4px;width:168px;height:70px;background:#434547"></div>
<svg class="abs" style="left:0;top:0" width="168" height="560" viewBox="0 0 168 560">
<rect x="1.2" y="3" width="4.3" height="1" fill="#a8662b"/>
<rect x="6.4" y="3" width="21.2" height="1" fill="#70757a"/>
<rect x="1.2" y="7" width="3.6" height="1" fill="#a8662b"/>
<rect x="1.2" y="11" width="1.7" height="1" fill="#48763f"/>
<rect x="1.9" y="13" width="4.8" height="1" fill="#48763f"/>
<rect x="1.9" y="15" width="0.9" height="1" fill="#48763f"/>
<rect x="2.4" y="17" width="9.0" height="1" fill="#48763f"/>
<rect x="1.9" y="19" width="1.0" height="1" fill="#48763f"/>
<rect x="1.2" y="21" width="7.1" height="1" fill="#70757a"/>
<rect x="1.2" y="23" width="7.8" height="1" fill="#a8662b"/>
<rect x="10.0" y="23" width="10.2" height="1" fill="#70757a"/>
<rect x="1.2" y="25" width="0.9" height="1" fill="#565b5f"/>
<rect x="4.1" y="27" width="12.6" height="1" fill="#a8662b"/>
<rect x="17.9" y="27" width="7.1" height="1" fill="#70757a"/>
<rect x="26.2" y="27" width="28.5" height="1" fill="#70757a"/>
<rect x="54.7" y="27" width="3.6" height="1" fill="#a8662b"/>
<rect x="4.1" y="31" width="6.2" height="1" fill="#70757a"/>
<rect x="4.1" y="33" width="4.3" height="1" fill="#a8662b"/>
<rect x="9.5" y="33" width="7.1" height="1" fill="#70757a"/>
<rect x="17.9" y="33" width="8.3" height="1" fill="#70757a"/>
<rect x="4.1" y="37" width="1.4" height="1" fill="#48763f"/>
<rect x="4.8" y="39" width="4.8" height="1" fill="#48763f"/>
<rect x="4.8" y="41" width="0.9" height="1" fill="#48763f"/>
<rect x="4.8" y="43" width="0.9" height="1" fill="#48763f"/>
<rect x="6.2" y="43" width="10.0" height="1" fill="#48763f"/>
<rect x="17.1" y="43" width="1.9" height="1" fill="#48763f"/>
<rect x="4.8" y="45" width="0.9" height="1" fill="#48763f"/>
<rect x="6.2" y="45" width="8.1" height="1" fill="#48763f"/>
<rect x="15.7" y="45" width="1.4" height="1" fill="#48763f"/>
<rect x="4.8" y="47" width="0.9" height="1" fill="#48763f"/>
<rect x="4.1" y="49" width="7.8" height="1" fill="#70757a"/>
<rect x="11.9" y="49" width="11.9" height="1" fill="#48763f"/>
<rect x="4.1" y="51" width="6.7" height="1" fill="#a8662b"/>
<rect x="11.9" y="51" width="11.9" height="1" fill="#70757a"/>
<rect x="25.0" y="51" width="5.9" height="1" fill="#70757a"/>
<rect x="32.1" y="51" width="4.8" height="1" fill="#70757a"/>
<rect x="37.6" y="51" width="4.0" height="1" fill="#70757a"/>
<rect x="42.8" y="51" width="11.9" height="1" fill="#70757a"/>
<rect x="55.9" y="51" width="5.9" height="1" fill="#70757a"/>
<rect x="63.0" y="51" width="11.9" height="1" fill="#70757a"/>
<rect x="75.6" y="51" width="4.8" height="1" fill="#70757a"/>
<rect x="4.1" y="53" width="0.9" height="1" fill="#565b5f"/>
<rect x="6.4" y="55" width="1.9" height="1" fill="#a8662b"/>
<rect x="6.4" y="57" width="0.9" height="1" fill="#565b5f"/>
<rect x="9.1" y="59" width="1.0" height="1" fill="#a8662b"/>
<rect x="11.0" y="59" width="25.2" height="1" fill="#70757a"/>
<rect x="9.1" y="61" width="0.9" height="1" fill="#565b5f"/>
<rect x="11.9" y="63" width="5.9" height="1" fill="#a8662b"/>
<rect x="18.6" y="63" width="19.5" height="1" fill="#70757a"/>
<rect x="38.8" y="63" width="12.4" height="1" fill="#48763f"/>
<rect x="51.9" y="63" width="7.6" height="1" fill="#70757a"/>
<rect x="9.1" y="65" width="0.9" height="1" fill="#565b5f"/>
<rect x="9.1" y="67" width="4.0" height="1" fill="#70757a"/>
<rect x="13.8" y="67" width="7.6" height="1" fill="#70757a"/>
<rect x="23.8" y="67" width="17.8" height="1" fill="#70757a"/>
<rect x="42.8" y="67" width="25.0" height="1" fill="#70757a"/>
<rect x="68.5" y="67" width="2.4" height="1" fill="#48763f"/>
<rect x="71.4" y="67" width="2.4" height="1" fill="#a8662b"/>
<rect x="9.1" y="69" width="4.0" height="1" fill="#70757a"/>
<rect x="13.8" y="69" width="5.2" height="1" fill="#70757a"/>
<rect x="20.2" y="69" width="16.6" height="1" fill="#70757a"/>
<rect x="38.1" y="69" width="6.7" height="1" fill="#70757a"/>
<rect x="9.1" y="73" width="20.7" height="1" fill="#70757a"/>
<rect x="29.8" y="73" width="4.8" height="1" fill="#48763f"/>
<rect x="9.1" y="75" width="19.5" height="1" fill="#70757a"/>
<rect x="28.6" y="75" width="9.5" height="1" fill="#48763f"/>
<rect x="38.3" y="75" width="1.2" height="1" fill="#a8662b"/>
<rect x="9.1" y="77" width="13.6" height="1" fill="#70757a"/>
<rect x="22.6" y="77" width="13.6" height="1" fill="#48763f"/>
<rect x="14.3" y="79" width="15.5" height="1" fill="#48763f"/>
<rect x="30.9" y="79" width="26.2" height="1" fill="#70757a"/>
<rect x="59.0" y="79" width="8.8" height="1" fill="#70757a"/>
<rect x="9.1" y="81" width="19.5" height="1" fill="#70757a"/>
<rect x="30.2" y="81" width="17.8" height="1" fill="#70757a"/>
<rect x="9.1" y="83" width="1.0" height="1" fill="#a8662b"/>
<rect x="11.0" y="83" width="5.2" height="1" fill="#70757a"/>
<rect x="9.1" y="85" width="0.9" height="1" fill="#565b5f"/>
<rect x="11.9" y="87" width="20.2" height="1" fill="#70757a"/>
<rect x="9.1" y="89" width="0.9" height="1" fill="#565b5f"/>
<rect x="6.4" y="91" width="0.9" height="1" fill="#565b5f"/>
<rect x="6.4" y="93" width="3.1" height="1" fill="#a8662b"/>
<rect x="10.3" y="93" width="7.1" height="1" fill="#70757a"/>
<rect x="18.1" y="93" width="1.0" height="1" fill="#70757a"/>
<rect x="6.4" y="95" width="0.9" height="1" fill="#565b5f"/>
<rect x="9.1" y="97" width="7.1" height="1" fill="#70757a"/>
<rect x="16.7" y="97" width="5.9" height="1" fill="#48763f"/>
<rect x="22.9" y="97" width="1.2" height="1" fill="#a8662b"/>
<rect x="9.1" y="99" width="0.9" height="1" fill="#73787c"/>
<rect x="9.1" y="149" width="0.9" height="1" fill="#73787c"/>
<rect x="11.8" y="101" width="0.9" height="1" fill="#73787c"/>
<rect x="11.8" y="147" width="0.9" height="1" fill="#73787c"/>
<rect x="14.5" y="103" width="0.9" height="1" fill="#73787c"/>
<rect x="14.5" y="145" width="0.9" height="1" fill="#73787c"/>
<rect x="17.2" y="105" width="0.9" height="1" fill="#73787c"/>
<rect x="17.2" y="143" width="0.9" height="1" fill="#73787c"/>
<rect x="19.9" y="107" width="0.9" height="1" fill="#73787c"/>
<rect x="19.9" y="141" width="0.9" height="1" fill="#73787c"/>
<rect x="22.6" y="109" width="0.9" height="1" fill="#73787c"/>
<rect x="22.6" y="139" width="0.9" height="1" fill="#73787c"/>
<rect x="25.3" y="111" width="0.9" height="1" fill="#73787c"/>
<rect x="25.3" y="137" width="0.9" height="1" fill="#73787c"/>
<rect x="28.0" y="113" width="0.9" height="1" fill="#73787c"/>
<rect x="28.0" y="135" width="0.9" height="1" fill="#73787c"/>
<rect x="30.8" y="115" width="0.9" height="1" fill="#73787c"/>
<rect x="30.8" y="133" width="0.9" height="1" fill="#73787c"/>
<rect x="33.5" y="117" width="0.9" height="1" fill="#73787c"/>
<rect x="33.5" y="131" width="0.9" height="1" fill="#73787c"/>
<rect x="36.2" y="119" width="0.9" height="1" fill="#73787c"/>
<rect x="36.2" y="129" width="0.9" height="1" fill="#73787c"/>
<rect x="38.9" y="121" width="0.9" height="1" fill="#73787c"/>
<rect x="38.9" y="127" width="0.9" height="1" fill="#73787c"/>
<rect x="41.6" y="123" width="0.9" height="1" fill="#73787c"/>
<rect x="41.6" y="125" width="0.9" height="1" fill="#73787c"/>
<rect x="6.4" y="151" width="0.9" height="1" fill="#565b5f"/>
<rect x="4.1" y="153" width="0.9" height="1" fill="#565b5f"/>
<rect x="4.1" y="157" width="1.4" height="1" fill="#48763f"/>
<rect x="4.8" y="159" width="4.8" height="1" fill="#48763f"/>
<rect x="4.8" y="161" width="0.9" height="1" fill="#48763f"/>
<rect x="4.1" y="163" width="8.3" height="1" fill="#70757a"/>
<rect x="12.4" y="163" width="11.4" height="1" fill="#48763f"/>
<rect x="4.1" y="165" width="7.4" height="1" fill="#70757a"/>
<rect x="4.1" y="167" width="3.1" height="1" fill="#a8662b"/>
<rect x="8.3" y="167" width="6.4" height="1" fill="#70757a"/>
<rect x="16.0" y="167" width="15.5" height="1" fill="#70757a"/>
<rect x="32.8" y="167" width="2.9" height="1" fill="#a8662b"/>
<rect x="36.9" y="167" width="3.1" height="1" fill="#a8662b"/>
<rect x="41.2" y="167" width="5.7" height="1" fill="#70757a"/>
<rect x="4.1" y="169" width="0.9" height="1" fill="#565b5f"/>
<rect x="6.4" y="171" width="1.9" height="1" fill="#a8662b"/>
<rect x="6.4" y="173" width="0.9" height="1" fill="#565b5f"/>
<rect x="9.1" y="175" width="5.7" height="1" fill="#565b5f"/>
<rect x="9.1" y="177" width="4.0" height="1" fill="#70757a"/>
<rect x="13.8" y="177" width="5.2" height="1" fill="#70757a"/>
<rect x="21.0" y="177" width="14.7" height="1" fill="#70757a"/>
<rect x="35.7" y="177" width="0.9" height="1" fill="#a8662b"/>
<rect x="9.1" y="181" width="4.0" height="1" fill="#70757a"/>
<rect x="13.8" y="181" width="5.2" height="1" fill="#70757a"/>
<rect x="21.0" y="181" width="21.2" height="1" fill="#70757a"/>
<rect x="43.3" y="181" width="3.1" height="1" fill="#70757a"/>
<rect x="46.4" y="181" width="0.9" height="1" fill="#a8662b"/>
<rect x="9.1" y="183" width="4.0" height="1" fill="#70757a"/>
<rect x="13.8" y="183" width="2.1" height="1" fill="#70757a"/>
<rect x="17.9" y="183" width="14.3" height="1" fill="#70757a"/>
<rect x="33.8" y="183" width="5.5" height="1" fill="#70757a"/>
<rect x="9.1" y="185" width="7.1" height="1" fill="#70757a"/>
<rect x="16.7" y="185" width="2.4" height="1" fill="#48763f"/>
<rect x="20.2" y="185" width="14.3" height="1" fill="#70757a"/>
<rect x="9.1" y="187" width="5.7" height="1" fill="#70757a"/>
<rect x="14.8" y="187" width="7.1" height="1" fill="#48763f"/>
<rect x="23.3" y="187" width="5.9" height="1" fill="#70757a"/>
<rect x="9.1" y="189" width="6.4" height="1" fill="#a8662b"/>
<rect x="15.5" y="189" width="3.6" height="1" fill="#48763f"/>
<rect x="20.2" y="189" width="2.4" height="1" fill="#70757a"/>
<rect x="9.1" y="191" width="3.6" height="1" fill="#a8662b"/>
<rect x="13.8" y="191" width="2.9" height="1" fill="#70757a"/>
<rect x="6.4" y="193" width="0.9" height="1" fill="#565b5f"/>
<rect x="6.4" y="195" width="3.1" height="1" fill="#a8662b"/>
<rect x="10.3" y="195" width="7.1" height="1" fill="#70757a"/>
<rect x="18.1" y="195" width="1.0" height="1" fill="#70757a"/>
<rect x="6.4" y="197" width="0.9" height="1" fill="#565b5f"/>
<rect x="9.1" y="199" width="4.0" height="1" fill="#a8662b"/>
<rect x="13.8" y="199" width="21.9" height="1" fill="#70757a"/>
<rect x="6.4" y="201" width="0.9" height="1" fill="#565b5f"/>
<rect x="4.1" y="203" width="0.9" height="1" fill="#565b5f"/>
<rect x="4.1" y="207" width="1.4" height="1" fill="#48763f"/>
<rect x="4.8" y="209" width="5.9" height="1" fill="#48763f"/>
<rect x="4.8" y="211" width="0.9" height="1" fill="#48763f"/>
<rect x="4.1" y="213" width="8.3" height="1" fill="#70757a"/>
<rect x="12.4" y="213" width="18.1" height="1" fill="#48763f"/>
<rect x="4.1" y="215" width="3.6" height="1" fill="#a8662b"/>
<rect x="8.3" y="215" width="3.1" height="1" fill="#a8662b"/>
<rect x="12.4" y="215" width="14.5" height="1" fill="#70757a"/>
<rect x="28.1" y="215" width="5.2" height="1" fill="#70757a"/>
<rect x="34.7" y="215" width="11.7" height="1" fill="#70757a"/>
<rect x="47.6" y="215" width="4.3" height="1" fill="#70757a"/>
<rect x="53.3" y="215" width="12.6" height="1" fill="#70757a"/>
<rect x="67.1" y="215" width="5.5" height="1" fill="#70757a"/>
<rect x="9.1" y="217" width="4.0" height="1" fill="#a8662b"/>
<rect x="13.8" y="217" width="5.7" height="1" fill="#70757a"/>
<rect x="4.1" y="219" width="0.9" height="1" fill="#565b5f"/>
<rect x="6.4" y="221" width="5.5" height="1" fill="#565b5f"/>
<rect x="6.4" y="223" width="4.3" height="1" fill="#70757a"/>
<rect x="11.4" y="223" width="5.7" height="1" fill="#70757a"/>
<rect x="18.6" y="223" width="13.6" height="1" fill="#70757a"/>
<rect x="32.1" y="223" width="0.9" height="1" fill="#a8662b"/>
<rect x="6.4" y="225" width="5.5" height="1" fill="#565b5f"/>
<rect x="6.4" y="227" width="4.3" height="1" fill="#70757a"/>
<rect x="11.4" y="227" width="7.6" height="1" fill="#70757a"/>
<rect x="20.5" y="227" width="6.9" height="1" fill="#70757a"/>
<rect x="28.6" y="227" width="24.3" height="1" fill="#70757a"/>
<rect x="54.0" y="227" width="17.4" height="1" fill="#70757a"/>
<rect x="71.4" y="227" width="0.9" height="1" fill="#a8662b"/>
<rect x="6.4" y="229" width="4.3" height="1" fill="#565b5f"/>
<rect x="6.4" y="231" width="4.3" height="1" fill="#70757a"/>
<rect x="11.4" y="231" width="7.6" height="1" fill="#70757a"/>
<rect x="20.5" y="231" width="29.5" height="1" fill="#70757a"/>
<rect x="51.2" y="231" width="1.7" height="1" fill="#48763f"/>
<rect x="53.1" y="231" width="1.2" height="1" fill="#a8662b"/>
<rect x="6.4" y="233" width="20.5" height="1" fill="#70757a"/>
<rect x="26.9" y="233" width="4.5" height="1" fill="#48763f"/>
<rect x="31.4" y="233" width="1.0" height="1" fill="#a8662b"/>
<rect x="6.4" y="235" width="16.2" height="1" fill="#70757a"/>
<rect x="22.6" y="235" width="13.6" height="1" fill="#48763f"/>
<rect x="36.4" y="235" width="1.2" height="1" fill="#a8662b"/>
<rect x="6.4" y="237" width="12.6" height="1" fill="#70757a"/>
<rect x="19.0" y="237" width="14.3" height="1" fill="#48763f"/>
<rect x="11.9" y="239" width="14.3" height="1" fill="#48763f"/>
<rect x="27.4" y="239" width="1.2" height="1" fill="#70757a"/>
<rect x="29.0" y="239" width="25.7" height="1" fill="#70757a"/>
<rect x="56.1" y="239" width="9.3" height="1" fill="#70757a"/>
<rect x="65.4" y="239" width="0.9" height="1" fill="#a8662b"/>
<rect x="6.4" y="241" width="22.1" height="1" fill="#70757a"/>
<rect x="30.2" y="241" width="17.8" height="1" fill="#70757a"/>
<rect x="4.1" y="243" width="0.9" height="1" fill="#565b5f"/>
<rect x="1.2" y="245" width="0.9" height="1" fill="#565b5f"/>
</svg>
</div>
<div id="rstripe" class="abs">
<div class="vt" style="left:13.400px;top:22.799999999999997px;font-size:9.9px;transform:rotate(90deg);color:#bbbbbb">Ant Build</div>
<div class="vt" style="left:13.400px;top:95.6px;font-size:9.7px;transform:rotate(90deg);color:#bbbbbb">Database</div>
<div class="vt" style="left:13.400px;top:170.3px;font-size:9.7px;transform:rotate(90deg);color:#bbbbbb">Maven Projects</div>
<div class="vt" style="left:13.400px;top:272.3px;font-size:9.85px;transform:rotate(90deg);color:#bbbbbb">Bean Validation</div>
<div class="vt" style="left:13.400px;top:537.2px;font-size:9.6px;transform:rotate(90deg);color:#bbbbbb">Word Book</div>
<svg class="abs" style="left:3px;top:8.500px" width="11" height="13" viewBox="0 0 11 13"><g stroke="#8f9497" stroke-width=".8" fill="none"><path d="M1 1l3 3M10 1l-3 3M0.500 6.500h3M10.500 6.500h-3M1 12l3-3.500M10 12l-3-3.500"/></g><ellipse cx="5.500" cy="3.200" rx="1.900" ry="1.900" fill="#c77ddb"/><ellipse cx="5.500" cy="6.400" rx="1.500" ry="1.500" fill="#c77ddb"/><ellipse cx="5.500" cy="9.800" rx="2.100" ry="2.500" fill="#c77ddb"/></svg>
<svg class="abs" style="left:2.500px;top:81px" width="12" height="12" viewBox="0 0 12 12"><g fill="none" stroke="#3d9fd0" stroke-width="2.100"><path d="M0.800 1.300c1 1.100 9.400 1.100 10.400 0M0.800 4.300c1 1.100 9.400 1.100 10.400 0M0.800 7.300c1 1.100 9.400 1.100 10.400 0M0.800 10.200c1 1.100 9.400 1.100 10.400 0"/></g></svg>
<div class="abs" style="left:3px;top:152.500px;font:italic 14px/14px 'Liberation Sans',sans-serif;color:#3d9fd0;height:14px">m</div>
<svg class="abs" style="left:2.500px;top:257.500px" width="12" height="12" viewBox="0 0 12 12"><ellipse cx="4.600" cy="4.400" rx="4.300" ry="2.800" transform="rotate(40 4.600 4.400)" fill="#e8963a"/><path d="M2.500 3.300l3.800 3.300" stroke="#9a5d1a" stroke-width=".9"/><path d="M4.500 8l2.300 2.500l4.500-5.500" fill="none" stroke="#35b346" stroke-width="1.900"/></svg>
<svg class="abs" style="left:3.300px;top:523.400px" width="10" height="11" viewBox="0 0 10 11"><rect x="0.600" y="0.600" width="8.800" height="9.300" fill="#d0d2d3" stroke="#8d9092" stroke-width="1"/><path d="M3.400 0.600v9.300M0.600 3.600h8.800M0.600 6.600h8.800" stroke="#6e7173" stroke-width="1"/></svg>
</div>
<div id="crumbs" class="abs">
<div class="t" style="left:57px;top:1.1px;font-size:10.2px;color:#c4c4c4">CommonController</div>
<svg class="abs" style="left:150.5px;top:5.5px" width="4" height="6" viewBox="0 0 4 6"><path d="M0.700 0.5L3.200 3L0.700 5.500" fill="none" stroke="#5f6264" stroke-width=".8"/></svg>
<div class="t" style="left:159.5px;top:1.1px;font-size:10.2px;color:#c4c4c4">fileDownload()</div>
</div>
<div id="bbar" class="abs">
<div class="t" style="left:40px;font-size:10.2px;color:#c4c4c4;top:2.200px;letter-spacing:-.25px"><u>6</u>: TODO</div>
<div class="t" style="left:112.300px;font-size:10.2px;color:#c4c4c4;top:2.200px;"><u>9</u>: Version Control</div>
<div class="t" style="left:228.200px;font-size:10.2px;color:#c4c4c4;top:2.200px;">Terminal</div>
<div class="t" style="left:300.500px;font-size:10.2px;color:#c4c4c4;top:2.200px;letter-spacing:-.27px">Java Enterprise</div>
<div class="t" style="left:400px;font-size:10.2px;color:#c4c4c4;top:2.200px;">Spring</div>
<div class="t" style="left:1170.300px;font-size:10.2px;color:#c4c4c4;top:2.200px;letter-spacing:-.4px">Event Log</div>
<svg class="abs" style="left:0;top:0" width="1240" height="20" viewBox="0 636 1240 20">
<circle cx="29.500" cy="643.500" r="2.700" fill="#e9e9e9" stroke="#8d9092" stroke-width=".6"/><circle cx="29.500" cy="643.500" r="1" fill="#8d9092"/>
<path d="M30.300 646.300a3.600 3.600 0 0 1 7.200 0z" fill="#4b4d4e"/><circle cx="33.900" cy="647.700" r="2.500" fill="#f0b989"/><path d="M30.300 651.400c.5-1.800 6.700-1.800 7.200 0z" fill="#3d9fd0"/>
<g stroke="#8a97a0" stroke-width="1.300" fill="none"><path d="M100.500 642.500l3.500 6.500M107.600 642.500l-3.500 6.500"/></g><circle cx="100.400" cy="642.300" r="2.200" fill="#40b6e0"/><circle cx="107.500" cy="642.300" r="2" fill="#8a97a0"/><circle cx="104" cy="649.300" r="2.100" fill="#8a97a0"/>
<rect x="213.400" y="640.600" width="10.600" height="10" fill="#1f2021" stroke="#8d9092" stroke-width=".9"/><path d="M213.400 641.200h10.600" stroke="#a9acae" stroke-width="1.300"/><path d="M215.300 644.800l2.200 1.700l-2.200 1.700M218.500 648.600h3" fill="none" stroke="#f0f0f0" stroke-width=".9"/>
<rect x="287" y="640.600" width="9.200" height="8.400" fill="#3d9fd0"/><rect x="292" y="645.400" width="6.200" height="6.200" fill="#b8742a"/><path d="M293.500 647v3M295 647v3M296.500 647v3" stroke="#8b5a1e" stroke-width=".5"/>
<path d="M386.300 650c-1-6 3.500-8.500 11-9.500c.8 5-1 10-6 10.200c-1.800 0-3.200-.5-5-.7z" fill="#62b543"/><path d="M387 650.500c2-3 4.500-5 8-7" stroke="#4a9a30" stroke-width=".7" fill="none"/>
<circle cx="1159.700" cy="645.200" r="5.900" fill="#62b543"/><path d="M1154.500 648l-.8 3.500l3.800-1.500z" fill="#62b543"/><text x="1157.800" y="648" font-family="Liberation Sans" font-weight="bold" font-size="7.500" fill="#f4f4f4">1</text>
</svg>
</div>
<div id="status" class="abs">
<div class="t" style="left:25.200px;font-size:10.200px;color:#c0c0c0;top:1.400px;letter-spacing:.03px">Want to custom your own rainbow colors?: //</div>
<div class="t" style="left:237.300px;font-size:10.200px;color:#c0c0c0;top:1.400px;letter-spacing:-.01px">Want to custom your own color scheme of Rainbow Brackets? Edit it under //</div>
<div class="t" style="left:592.300px;font-size:10.200px;color:#c0c0c0;top:1.400px;letter-spacing:-.065px">Settings &gt; Editor &gt; Color Scheme &gt; Rainbow Brackets</div>
<div class="t" style="left:847px;font-size:10.200px;color:#c0c0c0;top:1.400px;">(2 minutes ago)</div>
<div class="t" style="left:996px;font-size:10.200px;color:#c0c0c0;top:1.400px;">61:10</div>
<div class="t" style="left:1033px;font-size:10.200px;color:#c0c0c0;top:1.400px;letter-spacing:-.3px">CRLF</div>
<div class="t" style="left:1068.700px;font-size:10.200px;color:#c0c0c0;top:1.400px;">UTF-8</div>
<div class="t" style="left:1114.600px;font-size:10.200px;color:#c0c0c0;top:1.400px;">Git: master</div>
<svg class="abs" style="left:0;top:0" width="1240" height="18" viewBox="0 655 1240 18">
<rect x="4.400" y="658.800" width="11.300" height="9.300" fill="#5f6264" stroke="#9a9da0" stroke-width="1"/><path d="M4 669.600h12.200" stroke="#8d9092" stroke-width="1"/>
<path d="M1056.8 663.200l1.500-2l1.500 2zM1056.8 665.200l1.500 2l1.500-2z" fill="#b0b0b0"/>
<path d="M1098.8 663.200l1.500-2l1.500 2zM1098.8 665.200l1.500 2l1.500-2z" fill="#b0b0b0"/>
<path d="M1169.3 663.200l1.500-2l1.500 2zM1169.3 665.200l1.500 2l1.500-2z" fill="#b0b0b0"/>
<rect x="1185.500" y="663.300" width="5.600" height="4.700" fill="none" stroke="#b4b6b8" stroke-width="1.300"/><path d="M1183.300 663.500v-1.600a1.800 1.800 0 0 1 3.600 0v1.600" fill="none" stroke="#b4b6b8" stroke-width="1.100"/>
<g fill="none" stroke="#7b7e80" stroke-width=".9"><rect x="1204.200" y="658.300" width="7.200" height="5.200" rx="1.500"/><path d="M1203.300 664.300h9l.6 3.400h-10.200zM1205.500 667.700v2.300M1210.200 667.700v2.300"/><circle cx="1206.300" cy="661" r=".7"/><circle cx="1209.400" cy="661" r=".7"/></g>
<g fill="none" stroke-width="2"><path d="M1232.300 660.600a4.300 4.300 0 0 0-7-1" stroke="#ea4335"/><path d="M1225.300 659.600a4.300 4.300 0 0 0 0 5.500" stroke="#fbbc05"/><path d="M1225.300 665.100a4.300 4.300 0 0 0 6 .7" stroke="#34a853"/><path d="M1231.300 665.800a4.300 4.300 0 0 0 1.500-3.400h-4.300" stroke="#4285f4"/></g>
</svg>
</div>
<svg class="abs" style="left:0;top:0;pointer-events:none" width="1240" height="673" viewBox="0 0 1240 673">
<rect x="362" y="149" width="439" height="450.5" rx="2.5" fill="none" stroke="#fbb000" stroke-width="4"/>
<path d="M981 93.5L728 275.7" stroke="#fbb000" stroke-width="3.800" fill="none"/>
<path d="M713.3 285.4L727.500 267.300L734.900 277.500z" fill="#fbb000"/>
</svg>
</div></body></html>
